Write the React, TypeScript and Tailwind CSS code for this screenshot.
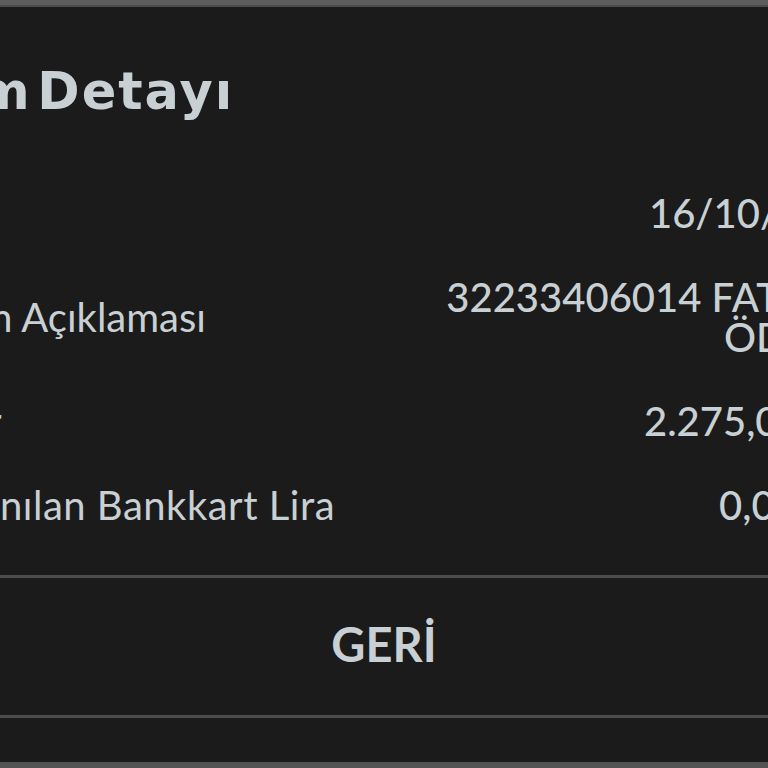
import React from "react";

export default function App() {
  return (
    <div className="w-[768px] h-[768px] overflow-hidden bg-[#1b1b1b] flex flex-col font-[Lato,sans-serif] text-[#c8d0d4]">
      <div className="h-[5px] shrink-0 bg-[#5d5d5d]" />
      <div className="h-[2px] shrink-0 bg-[#4c4c4c]" />
      <div className="flex-1 flex flex-col shrink-0 w-[951px] ml-[-89px] pt-[55px]">
        <h1 className="ml-[-44px] text-[51px] leading-[60px] font-bold whitespace-nowrap font-['DejaVu_Sans',sans-serif] tracking-[2px] [word-spacing:-14px]">
          İşlem Detayı
        </h1>
        <div className="mt-[49px] flex flex-col text-[40px] leading-[40px]">
          <div className="flex items-center justify-between py-[22px]">
            <span className="font-normal whitespace-nowrap">Tarih</span>
            <span className="font-medium text-right whitespace-nowrap mr-[-9px]">16/10/2023</span>
          </div>
          <div className="flex items-center justify-between py-[22px]">
            <span className="font-normal whitespace-nowrap ml-[10px]">İşlem Açıklaması</span>
            <div className="font-medium text-right whitespace-nowrap flex flex-col items-end">
              <span>32233406014 FATURA</span>
              <span className="mr-[-8px]">ÖDEME</span>
            </div>
          </div>
          <div className="flex items-center justify-between py-[22px]">
            <span className="font-normal whitespace-nowrap">Tutar</span>
            <span className="font-medium text-right whitespace-nowrap mr-[7px]">2.275,00 TL</span>
          </div>
          <div className="flex items-center justify-between py-[22px]">
            <span className="font-normal whitespace-nowrap tracking-[0.5px]">Kullanılan Bankkart Lira</span>
            <span className="font-medium text-right whitespace-nowrap mr-[11px]">0,00 TL</span>
          </div>
        </div>
        <div className="mt-[28px] h-[3px] shrink-0 bg-[#4a4d50]" />
        <div className="h-[137px] shrink-0 flex items-center justify-center pr-[5px] pb-[4px]">
          <span className="text-[47px] leading-[47px] font-bold">GERİ</span>
        </div>
        <div className="h-[3px] shrink-0 bg-[#4a4d50]" />
        <div className="flex-1" />
      </div>
      <div className="h-[6px] shrink-0 bg-[#535353]" />
    </div>
  );
}
